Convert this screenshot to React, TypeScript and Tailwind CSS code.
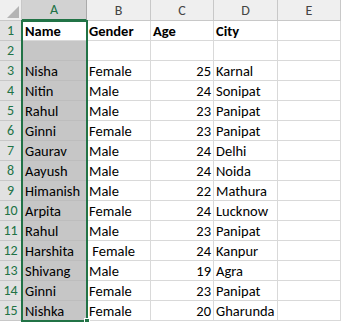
const rows: [string, string, string, string][] = [
  ["Nisha", "Female", "25", "Karnal"],
  ["Nitin", "Male", "24", "Sonipat"],
  ["Rahul", "Male", "23", "Panipat"],
  ["Ginni", "Female", "23", "Panipat"],
  ["Gaurav", "Male", "24", "Delhi"],
  ["Aayush", "Male", "24", "Noida"],
  ["Himanish", "Male", "22", "Mathura"],
  ["Arpita", "Female", "24", "Lucknow"],
  ["Rahul", "Male", "23", "Panipat"],
  ["Harshita", "\u00a0Female", "24", "Kanpur"],
  ["Shivang", "Male", "19", "Agra"],
  ["Ginni", "Female", "23", "Panipat"],
  ["Nishka", "Female", "20", "Gharunda"],
];

const head = "flex items-center justify-center border-r border-b border-[#c8c8c8] bg-[#efefef] text-[#444] text-[14px]";
const rowHead = "flex items-end justify-center border-r border-b border-[#c8c8c8] bg-[#e1e1e1] text-[#217346] text-[14px] leading-[19px]";
const cell = "flex items-end border-r border-b border-[#d9d9d9] px-[2px] leading-[18px] text-black text-[14.5px] whitespace-nowrap overflow-visible";
const selCell = "flex items-end border-r border-b border-[#bdbdbd] bg-[#c6c6c6] px-[3px] leading-[18px] text-black text-[14.5px] whitespace-nowrap";

function App() {
  return (
    <div className="relative w-[341px] h-[322px] overflow-hidden bg-white font-['Calibri','Lato',sans-serif]">
      <div className="grid grid-cols-[22px_65px_64px_63px_64px_1fr] grid-rows-[21px_repeat(15,20px)]">
        <div className="relative border-r border-b border-[#c8c8c8] bg-[#efefef]">
          <div className="absolute right-[2px] bottom-[2px] w-0 h-0 border-l-[12px] border-l-transparent border-b-[12px] border-b-[#b4b4b4]" />
        </div>
        <div className="flex items-center justify-center border-r border-b-2 border-r-[#aaa] border-b-[#217346] bg-[#d2d2d2] text-[#217346] text-[14px]">A</div>
        <div className={head}>B</div>
        <div className={head}>C</div>
        <div className={head}>D</div>
        <div className={head}>E</div>

        <div className={rowHead}>1</div>
        <div className={cell + " font-bold pl-[3px]"}>Name</div>
        <div className={cell + " font-bold"}>Gender</div>
        <div className={cell + " font-bold"}>Age</div>
        <div className={cell + " font-bold"}>City</div>
        <div className={cell} />

        <div className={rowHead}>2</div>
        <div className={selCell} />
        <div className={cell} />
        <div className={cell} />
        <div className={cell} />
        <div className={cell} />

        {rows.map((r, i) => (
          <div key={i} className="contents">
            <div className={rowHead}>{i + 3}</div>
            <div className={selCell}>{r[0]}</div>
            <div className={cell}>{r[1]}</div>
            <div className={cell + " justify-end"}>{r[2]}</div>
            <div className={cell}>{r[3]}</div>
            <div className={cell} />
          </div>
        ))}
      </div>
      <div className="pointer-events-none absolute left-[21px] top-[20px] w-[67px] h-[302px] border-2 border-[#217346]" />
      <div className="absolute left-[84px] top-[318px] w-[6px] h-[6px] bg-[#217346] border border-white" />
    </div>
  );
}

export default App;
